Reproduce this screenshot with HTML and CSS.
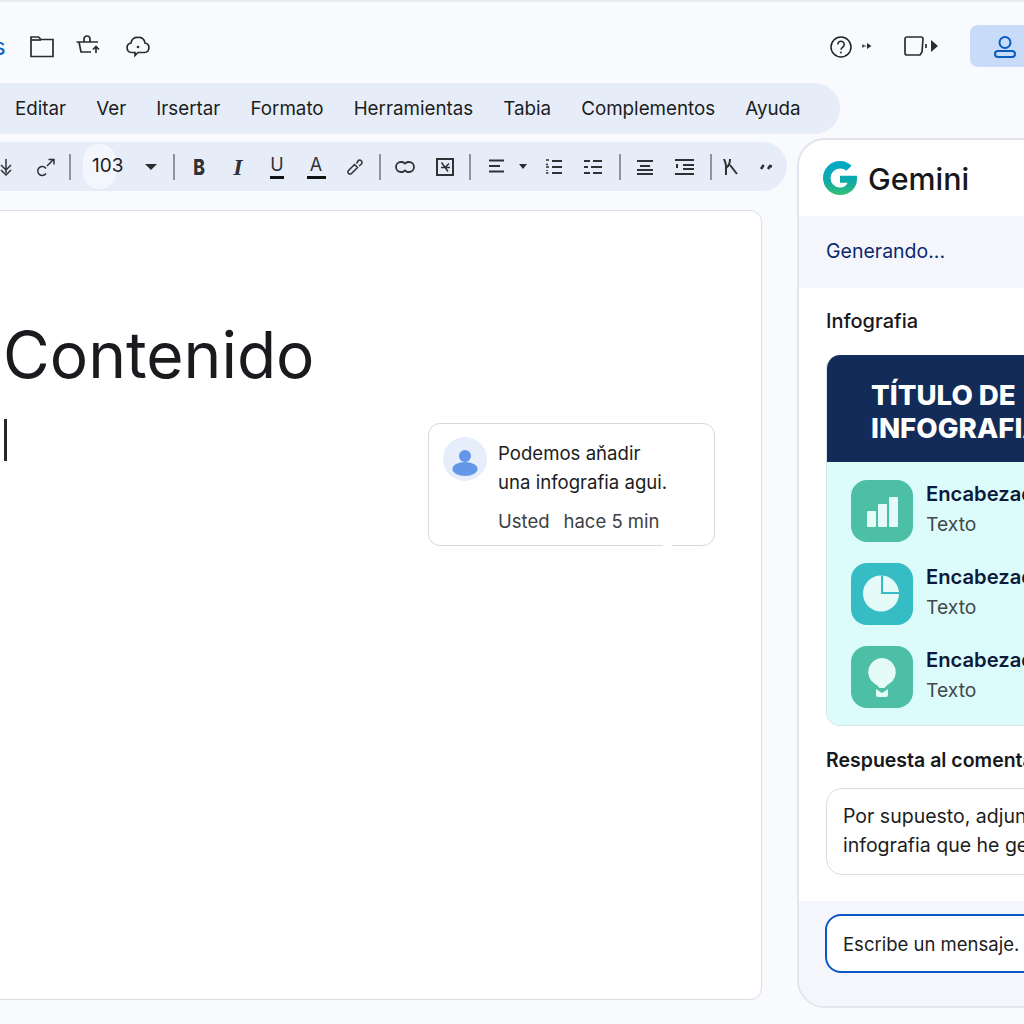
FILE: index.html
```html
<!DOCTYPE html>
<html lang="es">
<head>
    <meta charset="UTF-8">
    <title>Documento con Gemini</title>
    <link rel="stylesheet" href="styles.css">
</head>
<body>
    <div class="page">
        <header class="topbar">
            <div class="top-left">
                <span class="doc-name">s</span>
                <svg class="top-icon" viewBox="0 0 24 24"><path d="M1 22.500V3h7.500l2.500 2.500h12V22.500z"/><path d="M1 6h10"/></svg>
                <svg class="top-icon tub" viewBox="0 0 24 24"><path d="M.5 8H22M3 8l2 10h10"/><path d="M8 8V5a3 3 0 0 1 6 0v3"/><path d="M20 19v-6.500M17 15.500l3-3 3 3"/></svg>
                <svg class="top-icon cloud" viewBox="0 0 24 24"><path d="M9 18.500H5.500a4.800 4.800 0 0 1-.5-9.500A6 6 0 0 1 12 3.500 6 6 0 0 1 19 9a4.800 4.800 0 0 1-.5 9.500H12L9 21.500z"/><circle class="dot" cx="12" cy="13" r="1.300"/></svg>
            </div>
            <div class="top-right">
                <svg class="help-icon" viewBox="0 0 22 22"><circle cx="11" cy="11" r="10"/><path d="M7.800 8.500a3.200 3.200 0 1 1 5 2.600c-1.200.8-1.800 1.300-1.800 2.700"/><circle class="dot" cx="11" cy="16.500" r="1"/></svg>
                <svg class="mini-arrow" viewBox="0 0 10 10"><path d="M0 5h4M1 3.500v3"/><path class="dot" d="M5 2 9.500 5 5 8z"/></svg>
                <svg class="video-icon" viewBox="0 0 34 20"><path d="M3 1h14a2 2 0 0 1 2 2l-1 13-2 3H3a2 2 0 0 1-2-2V3a2 2 0 0 1 2-2z"/><path d="M22 8v4"/><path class="dot" d="M27 4v12l7-6z"/></svg>
                <button class="account-btn">
                    <svg viewBox="0 0 22 24"><circle cx="11" cy="8.500" r="5.500"/><rect x="1" y="17" width="20" height="6" rx="3"/></svg>
                </button>
            </div>
        </header>

        <nav class="menubar">
            <a href="#">Editar</a>
            <a href="#">Ver</a>
            <a href="#">Irsertar</a>
            <a href="#">Formato</a>
            <a href="#">Herramientas</a>
            <a href="#">Tabia</a>
            <a href="#">Complementos</a>
            <a href="#">Ayuda</a>
        </nav>

        <div class="workspace">
            <div class="editor">
                <div class="toolbar">
                    <div class="tools">
                        <svg class="tool" viewBox="0 0 24 24"><path d="M12 4v14M7 10l5 5 5-5M7 15l5 5 5-5"/></svg>
                        <svg class="tool" viewBox="0 0 24 24"><path d="M13 13.500a4.500 4.500 0 1 0 0 5"/><path d="M14 11l6-6M15.500 4.500H21v5"/></svg>
                    </div>
                    <span class="sep"></span>
                    <span class="font-size">103</span>
                    <span class="caret caret-size"></span>
                    <span class="sep"></span>
                    <div class="tools">
                        <span class="tool glyph bold">B</span>
                        <span class="tool glyph italic">I</span>
                        <span class="tool glyph under">U</span>
                        <span class="tool glyph under">A</span>
                        <svg class="tool" viewBox="0 0 24 24"><path d="M5.500 15.500l6-6 3 3-6 6a2.100 2.100 0 0 1-3-3zM13.500 8.500l1.500-2.500a2.300 2.300 0 0 1 3.500 3L16 11"/></svg>
                    </div>
                    <span class="sep"></span>
                    <div class="tools tools-wide">
                        <svg class="tool" viewBox="0 0 24 24"><path class="mid" d="M8 7h1c2 0 2 1.500 3 1.500S13 7 15 7h1a5 5 0 0 1 0 10h-1c-2 0-2-1.500-3-1.500S11 17 9 17H8A5 5 0 0 1 8 7z"/></svg>
                        <svg class="tool" viewBox="0 0 24 24"><path class="thick" d="M4 4h16v16H4z"/><path d="M8.500 7.500l6.500 9M16 8.500l-4 4H8M12 12.500h5"/></svg>
                    </div>
                    <span class="sep"></span>
                    <div class="tools tools-list">
                        <svg class="tool" viewBox="0 0 24 24"><path class="thick" d="M4 5.500h15M4 11h11M4 16.500h15"/></svg>
                        <span class="caret"></span>
                        <svg class="tool" viewBox="0 0 24 24"><path class="thick" d="M10 6h10M10 12h10M10 18h10"/><path d="M4 5h3M6 9.500H4M4 12h3M5 15v1M4 18h2.500"/></svg>
                        <svg class="tool" viewBox="0 0 24 24"><path class="thick" d="M3 6h6M12 6h9M3 12h4M10 12h11M3 18h6M12 18h9"/></svg>
                    </div>
                    <span class="sep"></span>
                    <div class="tools">
                        <svg class="tool" viewBox="0 0 24 24"><path class="thick" d="M4 6h16M7 11h10M4 15h16M4 19h16"/></svg>
                        <svg class="tool" viewBox="0 0 24 24"><path class="thick" d="M3 5h19M11 10h11M5 9v4M11 14h11M3 19h19"/></svg>
                    </div>
                    <span class="sep sep-last"></span>
                    <svg class="tool" viewBox="0 0 24 24"><path class="thick" d="M5 4c1 3 2 4 2 7v9M11 4c0 4-1 7-4 9M11 10l7 9"/></svg>
                    <svg class="tool tool-last" viewBox="0 0 24 24"><path class="heavy" d="M6 14l2-3 1 .5M13 14l2-3 2 .5"/></svg>
                </div>

                <main class="doc">
                    <h1 class="doc-title">Contenido</h1>
                    <span class="text-cursor"></span>

                    <aside class="comment">
                        <div class="avatar">
                            <svg viewBox="0 0 44 44"><circle cx="22" cy="19" r="6"/><ellipse cx="22" cy="32" rx="12.500" ry="7"/></svg>
                        </div>
                        <div class="comment-body">
                            <p>Podemos aňadir<br>una infografia agui.</p>
                            <div class="comment-meta"><span>Usted</span><span>hace 5 min</span></div>
                        </div>
                    </aside>
                </main>
            </div>

            <section class="gemini">
                <div class="gemini-head">
                    <svg class="g-logo" viewBox="0 0 34 34">
                        <defs>
                            <linearGradient id="gGrad" x1="0" y1="0" x2="0" y2="1">
                                <stop offset="0" stop-color="#00a9c9"/>
                                <stop offset="0.6" stop-color="#0fa9a8"/>
                                <stop offset="1" stop-color="#34c072"/>
                            </linearGradient>
                        </defs>
                        <path fill="url(#gGrad)" d="M17 0c4.600 0 8.600 1.800 11.600 4.800l-5.200 5A9 9 0 0 0 17 7.500a9.500 9.500 0 0 0 0 19c3.800 0 6.500-1.700 7.600-4.800H17v-7h17c.2 1 0 2.200 0 3.300C34 27 27 34 17 34A17 17 0 0 1 17 0z"/>
                    </svg>
                    <span class="g-name">Gemini</span>
                </div>
                <div class="gemini-status">Generando...</div>

                <div class="gemini-body">
                    <h3 class="label">Infografia</h3>
                    <div class="info-card">
                        <div class="info-title">TÍTULO DE<br>INFOGRAFIA</div>
                        <ul class="info-list">
                            <li>
                                <span class="info-icon">
                                    <svg viewBox="0 0 62 62"><rect x="16" y="31" width="9" height="16" rx="1"/><rect x="27" y="24" width="9" height="23" rx="1"/><rect x="38" y="17" width="9" height="30" rx="1"/></svg>
                                </span>
                                <div class="info-text"><strong>Encabezado</strong><span>Texto</span></div>
                            </li>
                            <li>
                                <span class="info-icon teal">
                                    <svg viewBox="0 0 62 62"><circle cx="30" cy="30.500" r="18"/><path class="pie-cut" d="M31 12.500V30h18"/></svg>
                                </span>
                                <div class="info-text"><strong>Encabezado</strong><span>Texto</span></div>
                            </li>
                            <li>
                                <span class="info-icon">
                                    <svg viewBox="0 0 62 62"><path d="M31 12a14 14 0 0 1 7 26c-2.500 1.500-4 3-4.500 4h-5c-.5-1-2-2.500-4.500-4a14 14 0 0 1 7-26z"/><path d="M25 43l6 4 6-4v6a2 2 0 0 1-2 2H27a2 2 0 0 1-2-2z"/></svg>
                                </span>
                                <div class="info-text"><strong>Encabezado</strong><span>Texto</span></div>
                            </li>
                        </ul>
                    </div>

                    <h3 class="label label-reply">Respuesta al comentario</h3>
                    <div class="reply">Por supuesto, adjunto la<br>infografia que he generado.</div>
                </div>

                <div class="gemini-foot">
                    <div class="msg-input">Escribe un mensaje.</div>
                </div>
            </section>
        </div>
    </div>
</body>
</html>
```

FILE: styles.css
```css
* {
    margin: 0;
    padding: 0;
    box-sizing: border-box;
}
html, body {
    height: 1024px;
    overflow: hidden;
}
body {
    background: #f9fafe;
    font-family: Inter, "Liberation Sans", sans-serif;
    color: #1c1d20;
}
.page {
    width: 1024px;
    height: 1024px;
    overflow: hidden;
    border-top: 2px solid #e9ebef;
}

/* top bar */
.topbar {
    height: 81px;
    display: flex;
    justify-content: space-between;
    align-items: center;
    padding-top: 7px;
}
.top-left {
    display: flex;
    align-items: center;
    gap: 24px;
}
.doc-name {
    color: #0b63c5;
    font-size: 24px;
    margin-left: -7px;
    width: 13px;
}
.top-icon {
    width: 24px;
    height: 24px;
    fill: none;
    stroke: #2a2c30;
    stroke-width: 1.7;
}
.tub {
    margin-left: -2px;
}
.cloud {
    margin-left: 2px;
}
.dot {
    fill: #2a2c30;
    stroke: none;
}
.top-right {
    display: flex;
    align-items: center;
}
.help-icon {
    width: 22px;
    height: 22px;
    margin-top: 2px;
    margin-right: 10px;
    fill: none;
    stroke: #1f2023;
    stroke-width: 1.5;
}
.mini-arrow {
    width: 10px;
    height: 10px;
    margin-right: 32px;
    fill: none;
    stroke: #2a2c30;
    stroke-width: 1.2;
}
.video-icon {
    width: 34px;
    height: 20px;
    margin-right: 32px;
    fill: none;
    stroke: #2a2c30;
    stroke-width: 1.7;
}
.account-btn {
    width: 54px;
    height: 42px;
    border: none;
    border-radius: 8px 0 0 8px;
    background: #c8dcfa;
    text-align: left;
    padding-left: 24px;
}
.account-btn svg {
    width: 22px;
    height: 24px;
    display: block;
    fill: none;
    stroke: #0a5cc0;
    stroke-width: 2;
}

/* menu */
.menubar {
    width: 840px;
    height: 51px;
    padding-left: 15px;
    display: flex;
    align-items: center;
    gap: 30px;
    background: #e6edf9;
    border-radius: 0 26px 26px 0;
}
.menubar a {
    color: #1c1d20;
    text-decoration: none;
    font-size: 18.8px;
}

/* editor */
.workspace {
    display: flex;
    margin-top: 4px;
    margin-left: -20px;
    gap: 10px;
}
.editor {
    width: 807px;
    flex-shrink: 0;
    padding-top: 4px;
}
.toolbar {
    height: 49px;
    display: flex;
    align-items: center;
    padding-left: 14px;
    background: #e6edf9;
    border-radius: 0 25px 25px 0;
}
.tools {
    display: flex;
    align-items: center;
    gap: 15px;
}
.tools-wide {
    gap: 16px;
}
.tools-list {
    gap: 10px;
    margin-left: 2px;
    margin-right: 2px;
}
.tools-list .caret + .tool {
    margin-left: 5px;
}
.tools-list .tool:last-child {
    margin-left: 5px;
}
.tool {
    width: 24px;
    height: 24px;
    flex-shrink: 0;
    fill: none;
    stroke: #2f3134;
    stroke-width: 1.5;
}
.tool .mid {
    stroke-width: 1.8;
}
.tool .thick {
    stroke-width: 2;
}
.tool .heavy {
    stroke-width: 2.6;
}
.tool-last {
    margin-left: 12px;
}
.glyph {
    display: block;
    text-align: center;
    font-size: 19px;
    line-height: 24px;
    color: #2f3134;
}
.bold {
    font-size: 22px;
    font-weight: 800;
    transform: scaleX(0.8);
}
.italic {
    font-family: "Liberation Serif", serif;
    font-style: italic;
    font-weight: 700;
    font-size: 24px;
}
.under {
    height: 28px;
    font-size: 18px;
    line-height: 23px;
}
.under::after {
    content: "";
    display: block;
    height: 3px;
    margin: 0 auto;
    width: 14px;
    background: #111;
}
.tool.under:nth-child(4)::after {
    width: 19px;
}
.sep {
    width: 2px;
    height: 26px;
    margin: 0 12px;
    background: #8f949b;
    flex-shrink: 0;
}
.sep-last {
    margin: 0 7px 0 14px;
}
.font-size {
    width: 33px;
    height: 45px;
    padding-left: 9px;
    border-radius: 16px;
    background: #f3f6fc;
    font-size: 19px;
    line-height: 43px;
    white-space: nowrap;
}
.caret {
    width: 0;
    height: 0;
    flex-shrink: 0;
    border-left: 6px solid transparent;
    border-right: 6px solid transparent;
    border-top: 6px solid #2a2c30;
}
.tools-list .caret {
    border-left-width: 4px;
    border-right-width: 4px;
    border-top-width: 5px;
}
.caret-size {
    margin-left: 29px;
    margin-right: 4px;
}
.doc {
    position: relative;
    height: 790px;
    margin-top: 19px;
    margin-right: 25px;
    padding: 106px 0 0 22px;
    background: #fff;
    border: 1px solid #d9dde6;
    border-radius: 12px;
}
.doc-title {
    font-size: 64px;
    font-weight: 400;
    line-height: 76px;
    color: #1a1b1e;
}
.text-cursor {
    display: block;
    width: 3px;
    height: 42px;
    margin-top: 26px;
    margin-left: 1px;
    background: #25272a;
}
.comment {
    position: absolute;
    left: 447px;
    top: 212px;
    width: 287px;
    height: 123px;
    display: flex;
    gap: 11px;
    padding: 13px 14px;
    background: #fff;
    border: 1px solid #d5d9e0;
    border-radius: 12px;
}
.comment::after {
    content: "";
    position: absolute;
    left: 234px;
    bottom: -2px;
    width: 9px;
    height: 3px;
    background: #fff;
}
.avatar {
    width: 44px;
    height: 44px;
    flex-shrink: 0;
    border-radius: 50%;
    background: #e6edfb;
}
.avatar svg {
    display: block;
    fill: #6497e8;
}
.comment-body p {
    font-size: 18.6px;
    line-height: 29px;
    padding-top: 2px;
}
.comment-meta {
    display: flex;
    gap: 14px;
    margin-top: 13px;
    font-size: 18.5px;
    line-height: 22px;
    color: #3c3f44;
}

/* gemini panel */
.gemini {
    width: 420px;
    height: 870px;
    flex-shrink: 0;
    display: flex;
    flex-direction: column;
    overflow: hidden;
    background: #fff;
    border: 2px solid #e2e5eb;
    border-radius: 28px 0 0 28px;
}
.gemini-head {
    height: 76px;
    display: flex;
    align-items: center;
    gap: 11px;
    padding-left: 24px;
}
.g-logo {
    width: 34px;
    height: 34px;
}
.g-name {
    margin-top: 2px;
    font-size: 30.4px;
    font-weight: 500;
    color: #17181b;
}
.gemini-status {
    height: 72px;
    padding-left: 27px;
    line-height: 70px;
    font-size: 19.5px;
    background: #f4f6fc;
    color: #0b2a6e;
}
.gemini-body {
    flex: 1;
    padding: 20px 27px 0;
}
.label {
    font-size: 20px;
    font-weight: 500;
    line-height: 26px;
    color: #17181b;
}
.label-reply {
    font-size: 19.5px;
    font-weight: 600;
    margin-top: 21px;
}
.info-card {
    width: 360px;
    margin-top: 21px;
    border-radius: 14px;
    overflow: hidden;
    border: 1px solid #d5e6e8;
    border-top: none;
    background: #dcfcfb;
}
.info-title {
    height: 107px;
    padding: 24px 0 0 44px;
    background: #122b58;
    color: #fff;
    font-size: 27.7px;
    font-weight: 800;
    line-height: 33px;
    white-space: nowrap;
}
.info-list {
    list-style: none;
    padding: 18px 0 17px 24px;
    display: flex;
    flex-direction: column;
    gap: 21px;
}
.info-list li {
    height: 62px;
    display: flex;
    align-items: center;
    gap: 13px;
}
.info-icon {
    width: 62px;
    height: 62px;
    flex-shrink: 0;
    border-radius: 16px;
    background: #4cbfa6;
}
.info-icon.teal {
    background: #35bcc4;
}
.info-icon svg {
    display: block;
    fill: #e4fbf7;
}
.info-icon .pie-cut {
    fill: none;
    stroke: #35bcc4;
    stroke-width: 2;
}
.info-text {
    margin-bottom: 5px;
}
.info-text strong {
    display: block;
    font-size: 20.2px;
    font-weight: 600;
    line-height: 30px;
    color: #0e1a3c;
}
.info-text span {
    display: block;
    font-size: 19.3px;
    line-height: 30px;
    color: #45474b;
}
.reply {
    width: 360px;
    height: 87px;
    margin-top: 15px;
    padding: 13px 16px;
    border: 1px solid #d9dce2;
    border-radius: 16px;
    font-size: 19.5px;
    line-height: 29px;
    white-space: nowrap;
}
.gemini-foot {
    height: 105px;
    padding: 13px 27px;
    background: #f4f6fc;
}
.msg-input {
    width: 360px;
    height: 59px;
    margin-left: -1px;
    padding-left: 16px;
    line-height: 56px;
    font-size: 18.5px;
    background: #fff;
    border: 2px solid #0b57c4;
    border-radius: 16px;
}
```
